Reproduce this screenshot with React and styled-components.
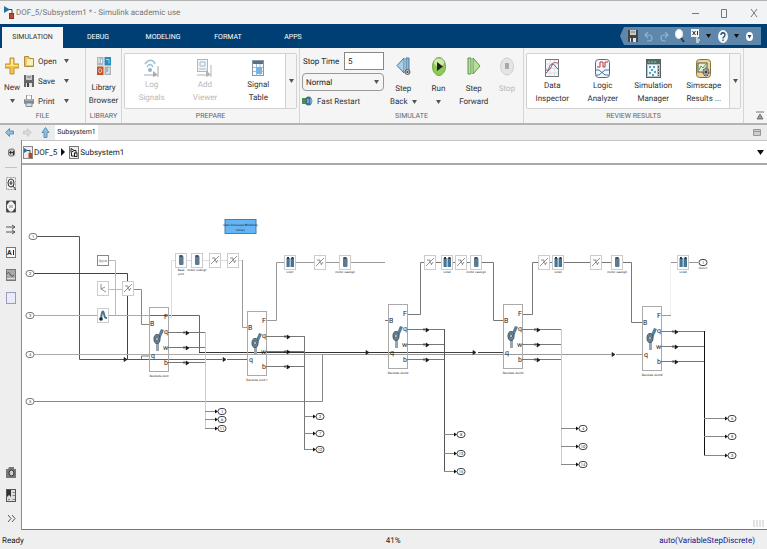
import React from "react";
import styled, { createGlobalStyle, css } from "styled-components";

const GlobalStyle = createGlobalStyle`
* {
  box-sizing: border-box;
}
body {
  margin: 0;
  background: #f2f2f2;
  color: #222;
  font-family: Roboto, "Open Sans", sans-serif;
  font-size: 8px;
  line-height: 13px;
  text-rendering: geometricPrecision;
}
button, input, select {
  font: inherit;
  color: inherit;
  text-rendering: inherit;
}
button {
  border: 0;
  padding: 0;
  background: none;
}
svg {
  display: block;
  flex: none;
}
`;

const Window = styled.div`
display: flex;
flex-direction: column;
min-height: 100vh;
border-top: 1px solid #b4b4b4;
`;

const TitleBar = styled.header`
display: flex;
align-items: center;
height: 23px;
padding: 0 8px 0 4px;
gap: 2px;
background: #f2f3f4;
color: #777;
`;

const Title = styled.h1`
flex: 1;
margin: 0;
font-size: 8px;
font-weight: 400;
`;

const WindowButtons = styled.div`
display: flex;
gap: 17px;
`;

const TabBar = styled.nav`
display: flex;
align-items: flex-end;
height: 24px;
padding: 0 6px 0 2px;
background: #003f73;
`;

const RibbonTab = styled.button`
height: 21px;
width: ${p => p.$width}px;
color: #fff;
font-size: 7px;
${p => p.$active && css`
  background: #f5f5f5;
  color: #333;
`}
`;

const QuickBar = styled.div`
display: flex;
align-items: center;
justify-content: space-between;
align-self: center;
width: 141px;
height: 18px;
margin-left: auto;
padding: 0 7px 0 8px;
background: #5f87ab;
clip-path: polygon(4px 0, 100% 0, 100% 100%, 4px 100%, 0 50%);
`;

const Ribbon = styled.div`
display: flex;
height: 77px;
background: #f5f5f5;
border-bottom: 2px solid #b3b3b3;
`;

const Group = styled.section`
display: flex;
flex-direction: column;
flex: ${p => p.$size} 1 ${p => p.$size}px;
min-width: 0;
padding: 4px 2px 0;
border-right: 1px solid #d5d5d5;
`;

const GroupBody = styled.div`
display: flex;
flex: 1;
justify-content: ${p => p.$justify || "flex-start"};
`;

const GroupName = styled.h2`
margin: 0;
height: 13px;
color: #666;
font-size: 7px;
font-weight: 400;
text-align: center;
`;

const BigButton = styled.button`
display: flex;
flex-direction: column;
align-items: center;
width: ${p => p.$width || 32}px;
gap: 6px;
padding-top: 5px;
color: ${p => (p.disabled ? "#b9b9b9" : "#333")};
`;

const ButtonText = styled.span`
display: flex;
align-items: center;
justify-content: center;
gap: 4px;
height: 13px;
white-space: nowrap;
`;

const FileList = styled.div`
display: flex;
flex-direction: column;
gap: 6px;
padding: 2px 0 0 2px;
`;

const SmallButton = styled.button`
display: flex;
align-items: center;
gap: 4px;
height: 14px;
color: #333;
`;

const FileLabel = styled.span`
min-width: 22px;
text-align: left;
`;

const Gallery = styled.div`
display: flex;
flex: 1;
height: 56px;
margin-top: 1px;
background: #fff;
border: 1px solid #d2d2d2;
border-radius: 2px;
`;

const GalleryItems = styled.div`
display: flex;
flex: 1;
`;

const GalleryItem = styled(BigButton)`
width: auto;
flex: 1;
gap: 1px;
padding-top: 5px;
`;

const GalleryMore = styled.button`
display: grid;
place-items: center;
width: 11px;
background: #f5f5f5;
border-left: 1px solid #d2d2d2;
`;

const SimForm = styled.div`
display: flex;
flex-direction: column;
width: 82px;
gap: 3px;
`;

const StopTime = styled.div`
display: flex;
align-items: center;
justify-content: space-between;
padding-left: 1px;
white-space: nowrap;
`;

const StopInput = styled.input`
width: 40px;
height: 18px;
padding: 0 3px;
background: #fff;
border: 1px solid #888;
`;

const ModeBox = styled.div`
position: relative;
height: 18px;
svg {
  position: absolute;
  right: 5px;
  top: 7px;
  pointer-events: none;
}
`;

const ModeSelect = styled.select`
width: 100%;
height: 18px;
padding: 0 3px;
appearance: none;
background: #f5f5f5;
border: 1px solid #999;
border-radius: 4px;
`;

const RibbonEnd = styled.div`
display: flex;
align-items: flex-end;
justify-content: flex-end;
width: 23px;
padding: 0 3px 3px 0;
`;

const DocBar = styled.div`
display: flex;
align-items: center;
height: 15px;
padding: 0 6px 0 5px;
gap: 9px;
background: #ececec;
`;

const DocTab = styled.button`
align-self: stretch;
width: 43px;
margin-left: -4px;
background: #fff;
font-size: 7px;
`;

const Spacer = styled.div`
flex: 1;
`;

const Workspace = styled.main`
display: flex;
flex: 1;
`;

const Palette = styled.aside`
display: flex;
flex-direction: column;
align-items: center;
width: 22px;
padding: 6px 0 5px;
background: #eeeeee;
border-right: 1px solid #8c8c8c;
`;

const PaletteGroup = styled.div`
display: flex;
flex-direction: column;
align-items: center;
gap: 10px;
`;

const PaletteRule = styled.div`
width: 12px;
height: 1px;
margin: 8px 0 9px;
background: #c4c4c4;
`;

const Editor = styled.div`
display: flex;
flex-direction: column;
flex: 1;
min-width: 0;
background: #fff;
`;

const PathBar = styled.div`
display: flex;
align-items: center;
height: 25px;
padding: 0 3px 0 1px;
gap: 2px;
border-top: 1px solid #c4c4c4;
border-bottom: 2px solid #a8a8a8;
`;

const Crumb = styled.a`
display: flex;
align-items: center;
gap: 1px;
color: #222;
text-decoration: none;
`;

const Canvas = styled.div`
flex: 1;
border-bottom: 1px solid #777;
`;

const StatusBar = styled.footer`
display: grid;
grid-template-columns: 52fr auto 48fr;
align-items: center;
height: 20px;
padding: 0 12px 0 2px;
background: #efefef;
`;

const Solver = styled.a`
justify-self: end;
color: #16168a;
text-decoration: none;
`;

/* ---------- icons ---------- */

const Icon = ({ w = 14, h = 14, children }) => (
  <svg width={w} height={h} viewBox={`0 0 ${w} ${h}`} fill="none" aria-hidden="true">
    {children}
  </svg>
);

const Caret = ({ color = "#555" }) => (
  <Icon w={5} h={4}><path d="M0 0h5L2.5 4z" fill={color} /></Icon>
);

const ModelIcon = () => (
  <Icon w={10} h={13}>
    <path d="M0 0v7l6-3.500z" fill="#2f6f98" />
    <path d="M5 3.500h3v4" stroke="#444" />
    <rect x="5.500" y="7.500" width="4" height="5" fill="#c0492b" stroke="#8b3521" />
  </Icon>
);

const CrumbModelIcon = () => (
  <Icon w={10} h={13}>
    <rect x=".5" y=".5" width="9" height="12" fill="#eee" stroke="#888" />
    <path d="M1 2v5l4-2.500z" fill="#2f6f98" />
    <path d="M4 4.500h3v3" stroke="#444" />
    <rect x="5.500" y="7" width="3.500" height="5" fill="#b6472b" />
  </Icon>
);

const CrumbSubsystemIcon = () => (
  <Icon w={10} h={13}>
    <rect x=".5" y=".5" width="9" height="12" fill="#eee" stroke="#777" />
    <path d="M2 2.500l3 2-3 2z" stroke="#222" />
    <rect x="5.500" y="7" width="2.500" height="3.500" stroke="#222" />
    <path d="M5 4.500h2V7M2.500 7v3h3" stroke="#222" />
  </Icon>
);

const PlusIcon = () => (
  <Icon w={14} h={18}>
    <path d="M5 1h4v6h5v4H9v6H5v-6H0V7h5z" fill="#f2c443" stroke="#bb9238" />
    <path d="M6 2h2v6h5v1H1V8h5z" fill="#fce9a1" />
  </Icon>
);

const FolderIcon = () => (
  <Icon w={10} h={12}>
    <path d="M.5 1.500h4l1 2h4v8h-9z" fill="#eec75a" stroke="#a88a42" />
    <path d="M3 4h6v6H3z" fill="#fbeeb8" />
  </Icon>
);

const SaveIcon = ({ color = "#666" }) => (
  <Icon w={10} h={12}>
    <path d="M0 0h10v12H0z" fill={color} />
    <path d="M2 0h6v5H2z" fill="#c9c9c9" />
    <path d="M3 2h4" stroke="#777" />
    <path d="M2 8h6v4H2z" fill="#e2e2e2" />
    <path d="M3 8h2v4H3z" fill="#444" />
  </Icon>
);

const PrinterIcon = () => (
  <Icon w={10} h={12}>
    <path d="M2.500 0h5v5h-5z" fill="#fff" stroke="#999" />
    <rect y="4" width="10" height="5" rx="1" fill="#7e8b96" />
    <path d="M1 5h8" stroke="#c4ced6" />
    <path d="M2 8h6v3.500H2z" fill="#cfe2f1" stroke="#888" />
  </Icon>
);

const LibraryIcon = () => (
  <Icon w={14} h={18}>
    <rect width="6.500" height="8.500" fill="#a9b7c1" />
    <rect x="7.500" width="6.500" height="8.500" fill="#2c8cbb" />
    <rect y="9.500" width="6.500" height="8.500" fill="#c14f28" />
    <rect x="7.500" y="9.500" width="6.500" height="8.500" fill="#aab2b8" />
    <path d="M2 1v5M4.500 2v4M12 11v5h-3" stroke="#fff" />
    <path d="M9 2.500h3v4" stroke="#9bd4ee" />
    <ellipse cx="3.200" cy="13.700" rx="1.500" ry="2.200" stroke="#f3c8b8" />
  </Icon>
);

const LogIcon = () => (
  <Icon w={15} h={18}>
    <path d="M1 5c3.500-5 8-5 10 0M3 8c2-3.500 4.500-3.500 6 0" stroke="#9dbfd2" strokeWidth="1.500" />
    <circle cx="6" cy="11" r="2" fill="#8fb5cc" />
    <path d="M0 16h9M14 7v11" stroke="#a9a9a9" />
    <path d="M9 12l5 4-5 2z" fill="#a9a9a9" />
  </Icon>
);

const ViewerIcon = () => (
  <Icon w={15} h={18}>
    <rect x=".5" y=".5" width="10" height="12" fill="#eff5f8" stroke="#a4bccb" />
    <path d="M3 3h5v4H3z" stroke="#a4bccb" />
    <path d="M2 10h7" stroke="#a4bccb" />
    <path d="M0 16h10M14 6v12" stroke="#b3b3b3" />
    <path d="M9 11l5 5-5 2z" fill="#b3b3b3" />
  </Icon>
);

const SignalTableIcon = () => (
  <Icon w={12} h={18}>
    <rect x=".5" y="1.500" width="11" height="15" fill="#f8fbff" stroke="#8898a5" />
    <path d="M1 2h10v3H1z" fill="#5c6f80" />
    <path d="M1 8.500h10M1 12.500h10M4.500 5v11M8 5v11" stroke="#a4bccf" />
    <rect x="4" y="8" width="6" height="7" fill="#75b4e6" />
  </Icon>
);

const RestartIcon = () => (
  <Icon w={11} h={10}>
    <rect y="2" width="5" height="6" fill="#4d9148" />
    <ellipse cx="6.500" cy="5" rx="3.500" ry="4.500" fill="#3e7096" />
    <path d="M8 2l3 3-3 3z" fill="#7ba7c6" />
    <path d="M6 3v4" stroke="#b6d7ed" />
  </Icon>
);

const StepBackIcon = () => (
  <Icon w={15} h={19}>
    <path d="M8 1v15L1 8.500z" fill="#a8d1ec" stroke="#4d7695" />
    <path d="M10 1h3v13h-3z" fill="#8dbbdc" stroke="#4d7695" />
    <circle cx="11.500" cy="15" r="2.500" fill="#ccc" stroke="#555" />
    <circle cx="11.500" cy="15" r="1" fill="#444" />
  </Icon>
);

const RunIcon = () => (
  <Icon w={14} h={19}>
    <ellipse cx="7" cy="9.500" rx="6.500" ry="9" fill="#8dcb52" stroke="#73a248" />
    <ellipse cx="7" cy="5.500" rx="5" ry="4" fill="#ceeaad" />
    <path d="M5 5v9l6-4.500z" fill="#222" />
  </Icon>
);

const StepForwardIcon = () => (
  <Icon w={14} h={19}>
    <path d="M1 1h3v16H1z" fill="#b5dea0" stroke="#5c9546" />
    <path d="M6 1v16l7-8z" fill="#b5e296" stroke="#5c9546" />
  </Icon>
);

const StopIcon = () => (
  <Icon w={14} h={19}>
    <ellipse cx="7" cy="9.500" rx="6.500" ry="8.500" fill="#e5e5e5" stroke="#cfcfcf" />
    <path d="M5 6h4v6H5z" fill="#a9a9a9" />
  </Icon>
);

const InspectorIcon = () => (
  <Icon w={14} h={19}>
    <rect x=".5" y=".5" width="13" height="17" fill="#f5f7f9" stroke="#777" />
    <path d="M1 5h12M1 9.500h12M1 14h12M5 1v16M9.500 1v16" stroke="#dbe1e6" />
    <path d="M1 14c3-1 3-9 6-9s3 3 6 5" stroke="#416dab" />
    <path d="M1 11c3 1 5-1 6-5s4-2 6-2" stroke="#c34545" />
  </Icon>
);

const LogicIcon = () => (
  <Icon w={15} h={19}>
    <rect x=".5" y=".5" width="14" height="18" rx="3" fill="#f3f7fb" stroke="#59697d" />
    <path d="M2 8h3V3h3v5h2V3h3" stroke="#bd3b3b" />
    <path d="M1 11h3l6 5h4M1 16h3l6-5h4" stroke="#4078ae" />
  </Icon>
);

const ManagerIcon = () => (
  <Icon w={15} h={19}>
    <rect x=".5" y=".5" width="14" height="18" fill="#b9c5c9" stroke="#555f66" />
    <path d="M1 1h13v4H1z" fill="#526c68" />
    <path d="M2 3h8" stroke="#89c19c" strokeDasharray="2 1" />
    <rect x="2" y="6" width="9" height="11" fill="#eff9fd" />
    <path d="M3 8h2M7 8h2M5 11h2M8 13h2M3 14h2M6 16h2" stroke="#2686a5" strokeWidth="1.500" />
    <path d="M12.500 7v10" stroke="#555" strokeDasharray="2 1" />
  </Icon>
);

const SimscapeIcon = () => (
  <Icon w={15} h={19}>
    <rect x=".5" y=".5" width="14" height="18" rx="3" fill="#ecd49b" stroke="#88703c" />
    <rect x="2" y="4" width="9" height="9" fill="#e2f0d8" stroke="#555" />
    <path d="M3 11l2-4 2 2 3-4" stroke="#55a443" />
    <ellipse cx="10" cy="13" rx="3" ry="4" fill="#999" stroke="#444" strokeDasharray="2 1" />
    <circle cx="10" cy="13" r="1" fill="#222" />
  </Icon>
);

const UndoIcon = ({ flip }) => (
  <Icon w={9} h={11}>
    <g transform={flip ? "matrix(-1 0 0 1 9 0)" : undefined}>
      <path d="M1 4h4c4 0 4 6 0 6H3M4 1L1 4l3 3" stroke="#8fb2d0" strokeWidth="1.200" />
    </g>
  </Icon>
);

const SearchIcon = () => (
  <Icon w={10} h={14}>
    <ellipse cx="4" cy="5" rx="3.500" ry="4.500" fill="#fff" stroke="#dbe7f1" />
    <path d="M6 9l3 4" stroke="#263f55" strokeWidth="2" />
  </Icon>
);

const ShortcutIcon = () => (
  <Icon w={9} h={14}>
    <rect width="8" height="8" fill="#f2f2f2" />
    <path d="M1.500 2l3 4M4.500 2l-3 4M6.500 2v4" stroke="#333" />
    <path d="M5 8h2v2h2v2H8v2H5z" fill="#b9cbd9" />
  </Icon>
);

const HelpIcon = () => (
  <Icon w={10} h={13}>
    <ellipse cx="5" cy="6.500" rx="5" ry="6.500" fill="#f3f7fa" />
    <path d="M3 5c0-3 4-3 4 0 0 2-2 1.500-2 3.500M5 9.500V11" stroke="#234a6c" strokeWidth="1.300" />
  </Icon>
);

const OptionsIcon = () => (
  <Icon w={9} h={11}>
    <ellipse cx="4.500" cy="5.500" rx="3.500" ry="4.500" fill="#fff" />
    <path d="M2.500 4h4l-2 3.500z" fill="#234a6c" />
  </Icon>
);

const CollapseRibbonIcon = () => (
  <Icon w={8} h={9}><path d="M0 1h8M4 3l3 5H1z" stroke="#777" fill="#999" /></Icon>
);

const ArrowIcon = ({ kind }) => (
  <Icon w={9} h={11}>
    {kind === "back" && <path d="M.5 5.500l4-4v2.500h4v3h-4v2.500z" fill="#8ec0e2" stroke="#5d92b6" />}
    {kind === "next" && <path d="M8.500 5.500l-4-4v2.500h-4v3h4v2.500z" fill="#d9d9d9" stroke="#ccc" />}
    {kind === "up" && <path d="M4.500.5l3.500 5H6v5H3v-5H1z" fill="#8ec0e2" stroke="#5d92b6" />}
  </Icon>
);

const paletteShapes = {
  hide: (
    <>
      <rect x="2.500" y="3" width="6" height="7" rx="2" fill="#bbb" stroke="#777" />
      <path d="M7.500 5v4M4 6.500h3M5 5L3.500 6.500 5 8" stroke="#333" />
    </>
  ),
  zoom: (
    <>
      <rect x=".5" y=".5" width="9" height="12" stroke="#999" strokeDasharray="2 1" />
      <ellipse cx="5" cy="6" rx="3" ry="4" fill="#eee" stroke="#333" />
      <path d="M3.500 6h3M5 4v4M7 9l3 4" stroke="#333" />
    </>
  ),
  fit: (
    <>
      <path d="M.5 1h9v11h-9z" fill="#f4f4f4" stroke="#555" />
      <path d="M1 1h3L1 5zM9 1H6l3 4zM1 12h3L1 8zM9 12H6l3-4z" fill="#444" />
      <path d="M3 5h4v3H3z" fill="#bbb" />
    </>
  ),
  arrows: <path d="M0 4h9M6 2l3 2-3 2M0 9h9M6 7l3 2-3 2" stroke="#555" />,
  image: (
    <>
      <rect x=".5" y=".5" width="9" height="11" fill="#aaa" stroke="#777" />
      <path d="M1 5c1-2 2-2 3 0s2 3 4 1" stroke="#444" />
      <path d="M1 9.500h8" stroke="#ddd" />
    </>
  ),
  area: <rect x=".5" y=".5" width="9" height="11" fill="#e9eafa" stroke="#9a9cbd" />,
  camera: (
    <>
      <path d="M0 3h2l1-2h5v2h2v9H0z" fill="#777" />
      <ellipse cx="5.500" cy="7" rx="2.500" ry="3" fill="#ccc" stroke="#333" />
    </>
  ),
  browser: (
    <>
      <rect x=".5" y=".5" width="9" height="12" fill="#ddd" stroke="#555" />
      <path d="M1 1h4v7L3 6 1 8z" fill="#333" />
      <path d="M6.500 3.500H9M6.500 6.500H9M2 10.500h2M6.500 10.500H9" stroke="#888" />
    </>
  ),
  more: <path d="M2 3l3 3.500L2 10M6 3l3 3.500L6 10" stroke="#555" />
};

const PaletteIcon = ({ name }) => <Icon w={10} h={13}>{paletteShapes[name]}</Icon>;

const AnnotationIcon = () => (
  <Icon w={10} h={13}>
    <rect x=".5" y="1.500" width="9" height="10" fill="#f8f8f8" stroke="#777" />
    <text x="1" y="9" fontSize="7" fontWeight="700" fill="#222">A</text>
    <path d="M7.500 4v5" stroke="#222" />
  </Icon>
);

/* ---------- block diagram ---------- */

const wires = [
  ["M36 236.500H79.500V359.500H149", "#555"],
  ["M34 273.500H127.500V359", "#444"],
  ["M34 315.500H149", "#aaa"],
  ["M149 315.500H199.500V352", "#666"],
  ["M199 352.500H388", "#333"],
  ["M34 354.500H322", "#aaa"],
  ["M34 401.500H322.500V354.500", "#888"],
  ["M322 354.500H388", "#999"],
  ["M149 359.500H222M227 359.500H247", "#666"],
  ["M141.500 359V356H149", "#777"],
  ["M109 260.500H115.500V315M108 289.500H123", "#bbb"],
  ["M134 289.500H141.500V324.500H149", "#888"],
  ["M168 317.500H171.500V260.500H242", "#ddd"],
  ["M242.500 260V327.500H247", "#999"],
  ["M266 320.500H276.500V262.500H385", "#999"],
  ["M385 320.500H388", "#777"],
  ["M407 314.500H420.500V262.500H493.500V320.500H503", "#777"],
  ["M388 352.500H474M478 352.500H503", "#444"],
  ["M388 354.500H611M616 354.500H642", "#999"],
  ["M522 314.500H532.500V262.500H631.500V322.500H642", "#777"],
  ["M661 315.500H671M671 262.500H698", "#999"],
  ["M670.500 262V315", "#eee"]
];

const joints = [
  { x: 149, y: 307, bus: 205, arrow: 186, busColor: "#ccc", out: 222, outs: [411, 419, 428], names: ["1", "6", "11"], label: "Revolute Joint" },
  { x: 247, y: 311, bus: 304, arrow: 287, busColor: "#777", out: 320, outs: [416, 433, 449], names: ["2", "7", "12"], label: "Revolute Joint 1" },
  { x: 388, y: 304, bus: 444, arrow: 426, busColor: "#555", out: 461, outs: [434, 453, 471], names: ["8", "13", "15"], label: "Revolute Joint2" },
  { x: 503, y: 304, bus: 561, arrow: 537, busColor: "#ccc", out: 583, outs: [428, 446, 464], names: ["4", "10", "14"], label: "Revolute Joint3" },
  { x: 642, y: 306, bus: 704, arrow: 675, busColor: "#111", out: 732, outs: [418, 436, 455], names: ["5", "9", "3"], label: "Revolute Joint4" }
];

const parts = [
  { x: 181, y: 260, kind: "body", label: "Base", label2: "joint" },
  { x: 197, y: 260, kind: "body", label: "motor coding1" },
  { x: 215, y: 260, kind: "transform" },
  { x: 233, y: 260, kind: "transform" },
  { x: 290, y: 262, kind: "link", label: "Link1" },
  { x: 320, y: 262, kind: "transform" },
  { x: 345, y: 262, kind: "body", label: "motor casing2" },
  { x: 430, y: 262, kind: "transform" },
  { x: 447, y: 262, kind: "link", label: "Link2" },
  { x: 461, y: 262, kind: "transform" },
  { x: 476, y: 262, kind: "body", label: "motor casing3" },
  { x: 544, y: 262, kind: "transform" },
  { x: 558, y: 262, kind: "link", label: "Link3" },
  { x: 596, y: 262, kind: "transform" },
  { x: 617, y: 262, kind: "body", label: "motor casing4" },
  { x: 683, y: 262, kind: "link", label: "Link4" },
  { x: 128, y: 288, kind: "transform" },
  { x: 103, y: 288, kind: "world" },
  { x: 103, y: 315, kind: "solver" }
];

const arrows = [[124, 359], [223, 359], [366, 352], [473, 352], [612, 354]];

const Port = ({ x, y, name, dark }) => (
  <g>
    <rect x={x - 4} y={y - 2.5} width="8" height="6" rx="3" fill="#fff" stroke={dark ? "#444" : "#777"} />
    <text x={x} y={y + 2} fontSize="4" textAnchor="middle">{name}</text>
  </g>
);

const Part = ({ x, y, kind, label, label2 }) => (
  <g transform={`translate(${x} ${y})`}>
    <rect x="-5.500" y="-6.500" width="11" height="14" fill="#fff" stroke="#ccc" />
    {kind === "body" && (
      <>
        <rect x="-2" y="-4" width="4.500" height="9" rx="1" fill="#5b7b92" />
        <ellipse cx="0" cy="-4" rx="2" ry="1" fill="#3a4c5b" />
      </>
    )}
    {kind === "link" && (
      <>
        <path d="M-3.500-4h3.300v9h-3.300zM.7-4H4v9H.7z" fill="#477493" />
        <path d="M-3-4h2M1.500-4h2" stroke="#263947" strokeWidth="2" />
        <path d="M.2-3v8" stroke="#9abbd1" />
      </>
    )}
    {kind === "transform" && (
      <path d="M-4 4L4-4M-3-2h3v3M1 3l2-3M-1 0l3 2" stroke="#777" strokeWidth=".8" fill="none" />
    )}
    {kind === "world" && <path d="M-2-4v5l5 3M-2 1L2-1" stroke="#777" strokeWidth=".8" fill="none" />}
    {kind === "solver" && (
      <>
        <path d="M-2 4C-1-5 0-5 1-1s1 4 3 4" stroke="#427898" strokeWidth="2" fill="none" />
        <circle cx="-2" cy="4" r="1.800" fill="#222" />
      </>
    )}
    {label && <text y="11" fontSize="3" textAnchor="middle">{label}</text>}
    {label2 && <text y="15" fontSize="3" textAnchor="middle">{label2}</text>}
  </g>
);

const Joint = ({ x, y, bus, arrow, busColor, out, outs, names, label }) => (
  <g>
    <rect x={x + 0.5} y={y + 0.5} width="19" height="64" fill="none" stroke="#aaa" />
    <g transform={`translate(${x + 8} ${y + 32})`}>
      <path d="M0-1L4-10l3 1-4 9z" fill="#567f9c" />
      <path d="M-1 2h3v10h-3z" fill="#9ba5ad" />
      <ellipse rx="3" ry="4.500" fill="#6e8797" stroke="#40596a" />
      <ellipse rx="1.300" ry="2" fill="#c5d4de" stroke="#333" strokeWidth=".6" />
    </g>
    <g fontSize="7">
      <text x={x + 1} y={y + 19}>B</text>
      <text x={x + 2} y={y + 51}>q</text>
      <text x={x + 15} y={y + 12}>F</text>
      <text x={x + 15} y={y + 27}>q</text>
      <text x={x + 14} y={y + 43}>w</text>
      <text x={x + 15} y={y + 58}>b</text>
    </g>
    {[25, 40, 55].map(d => (
      <g key={d}>
        <path d={`M${x + 19} ${y + d + 0.5}H${bus}`} stroke="#777" />
        <path d={`M${arrow} ${y + d - 1}v4l3-2zM${arrow - 2} ${y + d - 1}v3`} fill="#111" stroke="#222" strokeWidth=".7" />
      </g>
    ))}
    <path d={`M${bus + 0.5} ${y + 25}V${outs[2]}`} stroke={busColor} />
    {outs.map((oy, i) => (
      <g key={oy}>
        <path d={`M${bus} ${oy + 0.5}H${out - 6}`} stroke="#888" />
        <path d={`M${out - 7} ${oy - 1.5}v4l3-2z`} fill="#111" />
        <Port x={out} y={oy} name={names[i]} dark />
      </g>
    ))}
    <text x={x + 10} y={y + 70} fontSize="3" textAnchor="middle">{label}</text>
  </g>
);

const Diagram = () => (
  <svg width="100%" height="100%" viewBox="22 165 745 364" preserveAspectRatio="xMinYMin meet" fill="#222" role="img" aria-label="Block diagram">
    {wires.map(([d, color]) => <path key={d} d={d} fill="none" stroke={color} />)}
    <Port x={33} y={236} name="1" />
    <Port x={30} y={273} name="2" />
    <Port x={30} y={315} name="3" />
    <Port x={30} y={354} name="4" />
    <Port x={30} y={401} name="5" />
    <rect x="225" y="219.500" width="31" height="14" fill="#64b5f6" stroke="#497da6" />
    <text x="240.500" y="226" fontSize="3" textAnchor="middle">Open Simscape Multibody</text>
    <text x="240.500" y="231" fontSize="3" textAnchor="middle">Library</text>
    <rect x="97.500" y="255.500" width="11" height="10" fill="#fff" stroke="#888" />
    <text x="103" y="262" fontSize="3" textAnchor="middle">f(x)=0</text>
    {parts.map(p => <Part key={`${p.x}-${p.y}`} {...p} />)}
    {joints.map(j => <Joint key={j.x} {...j} />)}
    {arrows.map(([x, y]) => (
      <path key={x} d={`M${x} ${y - 1.5}v4l3-2z`} stroke="#222" strokeWidth=".7" />
    ))}
    <Port x={703} y={262} name="1" dark />
    <text x="703" y="269" fontSize="3" textAnchor="middle">Conn1</text>
    <path d="M754 520v7M757 520v7M760 520v7M763 520v7" stroke="#e2e2e2" strokeWidth="2" />
  </svg>
);

const BigTool = ({ as: Tool = BigButton, icon, lines, caret, ...rest }) => (
  <Tool {...rest}>
    {icon}
    <span>
      {lines.map((line, i) => (
        <ButtonText key={line}>
          {line}
          {caret === "beside" && i === lines.length - 1 && <Caret />}
        </ButtonText>
      ))}
      {caret === "below" && <ButtonText><Caret /></ButtonText>}
    </span>
  </Tool>
);

const tabs = [["SIMULATION", 61], ["DEBUG", 70], ["MODELING", 60], ["FORMAT", 70], ["APPS", 60]];

const App = () => (
  <>
    <GlobalStyle />
    <Window>
      <TitleBar>
        <ModelIcon />
        <Title>DOF_5/Subsystem1 * - Simulink academic use</Title>
        <WindowButtons>
          <button aria-label="Minimize"><Icon w={12} h={12}><path d="M3 6.500h7" stroke="#777" /></Icon></button>
          <button aria-label="Maximize"><Icon w={12} h={12}><path d="M3.500 2.500h5v8h-5z" stroke="#777" /></Icon></button>
          <button aria-label="Close"><Icon w={12} h={12}><path d="M4 2l6 8M10 2l-6 8" stroke="#777" /></Icon></button>
        </WindowButtons>
      </TitleBar>
      <TabBar>
        {tabs.map(([name, width], i) => (
          <RibbonTab key={name} $width={width} $active={i === 0}>{name}</RibbonTab>
        ))}
        <QuickBar>
          <button aria-label="Save"><SaveIcon color="#444" /></button>
          <button aria-label="Undo"><UndoIcon /></button>
          <button aria-label="Redo"><UndoIcon flip /></button>
          <button aria-label="Search"><SearchIcon /></button>
          <button aria-label="Shortcuts"><ShortcutIcon /></button>
          <Caret color="#111" />
          <button aria-label="Help"><HelpIcon /></button>
          <Caret color="#111" />
          <button aria-label="Options"><OptionsIcon /></button>
        </QuickBar>
      </TabBar>
      <Ribbon>
        <Group $size={86}>
          <GroupBody>
            <BigTool $width={20} icon={<PlusIcon />} lines={["New"]} caret="below" />
            <FileList>
              <SmallButton><FolderIcon /><FileLabel>Open</FileLabel><Caret /></SmallButton>
              <SmallButton><SaveIcon /><FileLabel>Save</FileLabel><Caret /></SmallButton>
              <SmallButton><PrinterIcon /><FileLabel>Print</FileLabel><Caret /></SmallButton>
            </FileList>
          </GroupBody>
          <GroupName>FILE</GroupName>
        </Group>
        <Group $size={36}>
          <GroupBody $justify="center">
            <BigTool icon={<LibraryIcon />} lines={["Library", "Browser"]} />
          </GroupBody>
          <GroupName>LIBRARY</GroupName>
        </Group>
        <Group $size={178}>
          <GroupBody>
            <Gallery>
              <GalleryItems>
                <BigTool as={GalleryItem} disabled icon={<LogIcon />} lines={["Log", "Signals"]} />
                <BigTool as={GalleryItem} disabled icon={<ViewerIcon />} lines={["Add", "Viewer"]} />
                <BigTool as={GalleryItem} icon={<SignalTableIcon />} lines={["Signal", "Table"]} />
              </GalleryItems>
              <GalleryMore aria-label="More"><Caret /></GalleryMore>
            </Gallery>
          </GroupBody>
          <GroupName>PREPARE</GroupName>
        </Group>
        <Group $size={224}>
          <GroupBody $justify="space-between">
            <SimForm>
              <StopTime>
                <label htmlFor="stop-time">Stop Time</label>
                <StopInput id="stop-time" defaultValue="5" />
              </StopTime>
              <ModeBox>
                <ModeSelect aria-label="Simulation mode"><option>Normal</option></ModeSelect>
                <Caret />
              </ModeBox>
              <SmallButton><RestartIcon />Fast Restart</SmallButton>
            </SimForm>
            <BigTool icon={<StepBackIcon />} lines={["Step", "Back"]} caret="beside" />
            <BigTool icon={<RunIcon />} lines={["Run"]} caret="below" />
            <BigTool icon={<StepForwardIcon />} lines={["Step", "Forward"]} />
            <BigTool $width={28} disabled icon={<StopIcon />} lines={["Stop"]} />
          </GroupBody>
          <GroupName>SIMULATE</GroupName>
        </Group>
        <Group $size={220}>
          <GroupBody>
            <Gallery>
              <GalleryItems>
                <BigTool as={GalleryItem} icon={<InspectorIcon />} lines={["Data", "Inspector"]} />
                <BigTool as={GalleryItem} icon={<LogicIcon />} lines={["Logic", "Analyzer"]} />
                <BigTool as={GalleryItem} icon={<ManagerIcon />} lines={["Simulation", "Manager"]} />
                <BigTool as={GalleryItem} icon={<SimscapeIcon />} lines={["Simscape", "Results ..."]} />
              </GalleryItems>
              <GalleryMore aria-label="More"><Caret /></GalleryMore>
            </Gallery>
          </GroupBody>
          <GroupName>REVIEW RESULTS</GroupName>
        </Group>
        <RibbonEnd><button aria-label="Collapse toolstrip"><CollapseRibbonIcon /></button></RibbonEnd>
      </Ribbon>
      <DocBar>
        <button aria-label="Back"><ArrowIcon kind="back" /></button>
        <button aria-label="Forward"><ArrowIcon kind="next" /></button>
        <button aria-label="Up"><ArrowIcon kind="up" /></button>
        <DocTab>Subsystem1</DocTab>
        <Spacer />
        <Icon w={8} h={7}><path d="M.5.500h7v6h-7zM1 2.500h6" stroke="#999" fill="#ccc" /></Icon>
      </DocBar>
      <Workspace>
        <Palette>
          <button aria-label="Hide browser"><PaletteIcon name="hide" /></button>
          <PaletteRule />
          <PaletteGroup>
            <button aria-label="Zoom"><PaletteIcon name="zoom" /></button>
            <button aria-label="Fit to view"><PaletteIcon name="fit" /></button>
            <button aria-label="Sample time"><PaletteIcon name="arrows" /></button>
            <button aria-label="Annotation"><AnnotationIcon /></button>
            <button aria-label="Image"><PaletteIcon name="image" /></button>
            <button aria-label="Area"><PaletteIcon name="area" /></button>
          </PaletteGroup>
          <Spacer />
          <PaletteGroup>
            <button aria-label="Screenshot"><PaletteIcon name="camera" /></button>
            <button aria-label="Model browser"><PaletteIcon name="browser" /></button>
            <button aria-label="More tools"><PaletteIcon name="more" /></button>
          </PaletteGroup>
        </Palette>
        <Editor>
          <PathBar>
            <Crumb href="#model"><CrumbModelIcon />DOF_5</Crumb>
            <Icon w={8} h={8}><path d="M2 0v8l4-4z" fill="#111" /></Icon>
            <Crumb href="#subsystem"><CrumbSubsystemIcon />Subsystem1</Crumb>
            <Spacer />
            <Icon w={7} h={5}><path d="M0 0h7L3.500 5z" fill="#111" /></Icon>
          </PathBar>
          <Canvas><Diagram /></Canvas>
        </Editor>
      </Workspace>
      <StatusBar>
        <span>Ready</span>
        <span>41%</span>
        <Solver href="#solver">auto(VariableStepDiscrete)</Solver>
      </StatusBar>
    </Window>
  </>
);

export default App;
